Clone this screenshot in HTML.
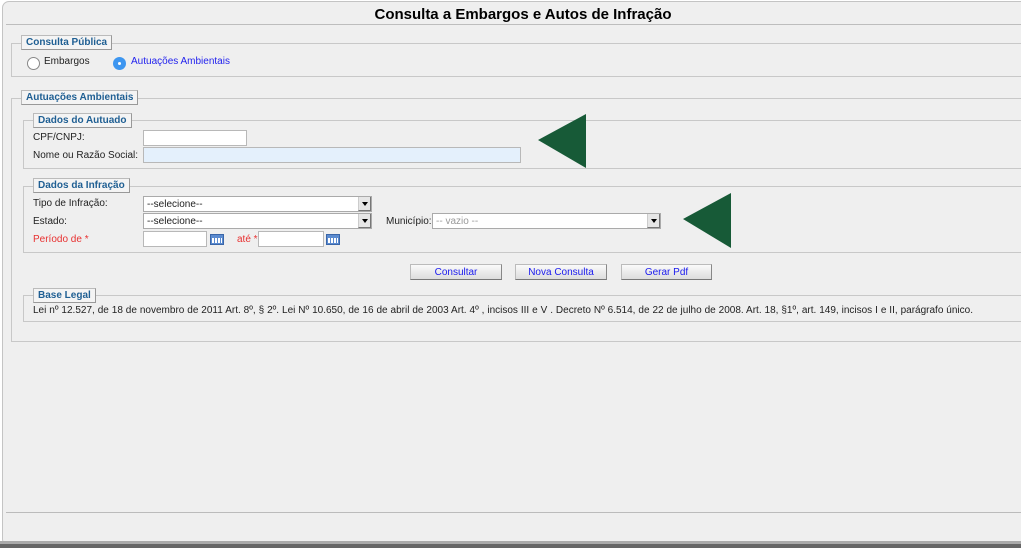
<!DOCTYPE html>
<html><head><meta charset="utf-8"><style>
*{margin:0;padding:0;box-sizing:border-box}
body{width:1021px;height:548px;background:#fff;position:relative;overflow:hidden;font-family:"Liberation Sans",Arial,sans-serif;font-size:10px;color:#222}
.a{position:absolute;white-space:nowrap}
.wrap{left:2px;top:1px;width:1030px;height:545px;background:#efefef;border:1px solid #c4c4c4;border-radius:7px}
.fs{position:absolute;border:1px solid #c8c8c8;border-right:none}
.lg{position:absolute;background:#f4f4f4;border:1px solid #bbb;border-right-color:#999;border-bottom-color:#999;color:#1f5f93;font-weight:bold;font-size:10px;padding:0 4px;height:15px;line-height:13px;white-space:nowrap}
.in{position:absolute;background:#fff;border:1px solid #b8b8b8;height:16px}
.sel{position:absolute;background:#fff;border:1px solid #aaa;height:16px;font-size:10px;line-height:15px;padding-left:3px}
.sel b{position:absolute;right:0;top:0;width:13px;height:14px;background:#e6e6e6;border-left:1px solid #ccc;border-right:1px solid #777;border-bottom:1px solid #777}
.sel b:after{content:"";position:absolute;left:3px;top:5px;border:3px solid transparent;border-top:4px solid #000}
.btn{position:absolute;height:16px;background:linear-gradient(#fafafa,#ddd);border:1px solid #bbb;border-bottom-color:#777;border-right-color:#888;color:#1a1aee;text-align:center;line-height:15px;font-size:10px}
.cal{position:absolute;width:14px;height:11px;background:#5b8bd0;border:1px solid #3a66a8}
.cal:after{content:"";position:absolute;left:1px;top:3px;width:10px;height:5px;background:repeating-linear-gradient(90deg,#fff 0 2px,#5b8bd0 2px 3px)}
</style></head><body>
<div class="a wrap"></div>
<div class="a" style="left:0;top:6px;width:1046px;text-align:center;font-size:15px;font-weight:bold;color:#000">Consulta a Embargos e Autos de Infração</div>
<div class="a" style="left:6px;top:24px;width:1015px;border-top:1px solid #bdbdbd"></div>

<div class="fs" style="left:11px;top:43px;width:1020px;height:34px"></div>
<div class="lg" style="left:21px;top:35px">Consulta Pública</div>
<div class="a" style="left:27px;top:57px;width:13px;height:13px;border-radius:50%;background:#fff;border:1px solid #888"></div>
<div class="a" style="left:44px;top:56px">Embargos</div>
<div class="a" style="left:113px;top:57px;width:13px;height:13px;border-radius:50%;background:#3d96f0"><div class="a" style="left:5px;top:5px;width:3px;height:3px;background:#fff;border-radius:50%"></div></div>
<div class="a" style="left:131px;top:56px;color:#2222ee">Autuações Ambientais</div>

<div class="fs" style="left:11px;top:98px;width:1020px;height:244px"></div>
<div class="lg" style="left:21px;top:90px">Autuações Ambientais</div>

<div class="fs" style="left:23px;top:120px;width:1010px;height:49px"></div>
<div class="lg" style="left:33px;top:113px">Dados do Autuado</div>
<div class="a" style="left:33px;top:132px">CPF/CNPJ:</div>
<div class="in" style="left:143px;top:130px;width:104px"></div>
<div class="a" style="left:33px;top:150px">Nome ou Razão Social:</div>
<div class="in" style="left:143px;top:147px;width:378px;background:#e4f0fc"></div>
<svg class="a" style="left:536px;top:113px" width="52" height="56"><polygon points="2,27 50,1 50,55" fill="#175a37"/></svg>

<div class="fs" style="left:23px;top:186px;width:1010px;height:67px"></div>
<div class="lg" style="left:33px;top:178px">Dados da Infração</div>
<div class="a" style="left:33px;top:198px">Tipo de Infração:</div>
<div class="sel" style="left:143px;top:196px;width:229px">--selecione--<b></b></div>
<div class="a" style="left:33px;top:216px">Estado:</div>
<div class="sel" style="left:143px;top:213px;width:229px">--selecione--<b></b></div>
<div class="a" style="left:386px;top:216px">Município:</div>
<div class="sel" style="left:432px;top:213px;width:229px;color:#999">-- vazio --<b></b></div>
<div class="a" style="left:33px;top:234px;color:#e83030">Período de *</div>
<div class="in" style="left:143px;top:231px;width:64px"></div>
<div class="cal" style="left:210px;top:234px"></div>
<div class="a" style="left:237px;top:234px;color:#e83030">até *</div>
<div class="in" style="left:258px;top:231px;width:66px"></div>
<div class="cal" style="left:326px;top:234px"></div>
<svg class="a" style="left:681px;top:192px" width="52" height="57"><polygon points="2,27 50,1 50,56" fill="#175a37"/></svg>

<div class="btn" style="left:410px;top:264px;width:92px">Consultar</div>
<div class="btn" style="left:515px;top:264px;width:92px">Nova Consulta</div>
<div class="btn" style="left:621px;top:264px;width:91px">Gerar Pdf</div>

<div class="fs" style="left:23px;top:295px;width:1010px;height:27px"></div>
<div class="lg" style="left:33px;top:288px">Base Legal</div>
<div class="a" style="left:33px;top:305px;word-spacing:0.15px">Lei nº 12.527, de 18 de novembro de 2011 Art. 8º, § 2º. Lei Nº 10.650, de 16 de abril de 2003 Art. 4º , incisos III e V . Decreto Nº 6.514, de 22 de julho de 2008. Art. 18, §1º, art. 149, incisos I e II, parágrafo único.</div>

<div class="a" style="left:6px;top:512px;width:1015px;border-top:1px solid #bbb"></div>
<div class="a" style="left:0;top:541px;width:1021px;height:3px;background:#aaa"></div>
<div class="a" style="left:0;top:544px;width:1021px;height:4px;background:#666"></div>
</body></html>
